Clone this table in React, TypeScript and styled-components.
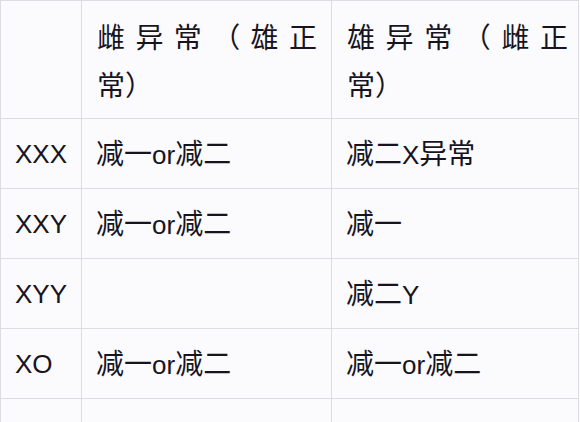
import React from "react";
import styled, { createGlobalStyle } from "styled-components";

const Global = createGlobalStyle`
  html, body { margin: 0; padding: 0; background: #fbfbfd; }
  body { font-family: "Liberation Sans", "Noto Sans CJK SC", sans-serif; }
`;

const Table = styled.table`
  border-collapse: collapse;
  table-layout: fixed;
  width: 578px;
  background: #fbfbfd;
  color: #17141f;
  font-size: 26px;
`;

const HeadCell = styled.th<{ $padRight: number }>`
  border: 1px solid #dcdde3;
  height: 118px;
  box-sizing: border-box;
  padding: 10px ${(p) => p.$padRight}px 10px 15px;
  text-align: justify;
  text-align-last: left;
  text-spacing-trim: space-all;
  vertical-align: middle;
  font-family: "Noto Sans CJK SC", sans-serif;
  font-weight: normal;
  font-size: 28px;
  line-height: 48px;
  overflow: hidden;
`;

const Cell = styled.td`
  border: 1px solid #dcdde3;
  height: 69px;
  padding: 0 0 0 14px;
  vertical-align: middle;
  line-height: 30px;
  white-space: nowrap;
`;

const CjkRun = styled.span`
  font-family: "Noto Sans CJK SC", sans-serif;
  font-size: 28px;
`;

function MixedText({ text }: { text: string }) {
  const parts = text.match(/[\u3000-\u9fff\uff00-\uffef]+|[^\u3000-\u9fff\uff00-\uffef]+/g) || [];
  return (
    <>
      {parts.map((p, i) =>
        /[\u3000-\u9fff\uff00-\uffef]/.test(p) ? <CjkRun key={i}>{p}</CjkRun> : <span key={i}>{p}</span>
      )}
    </>
  );
}

const rows: [string, string, string][] = [
  ["XXX", "减一or减二", "减二X异常"],
  ["XXY", "减一or减二", "减一"],
  ["XYY", "", "减二Y"],
  ["XO", "减一or减二", "减一or减二"],
  ["", "", ""],
];

export default function App() {
  return (
    <>
      <Global />
      <Table>
        <colgroup>
          <col style={{ width: 81 }} />
          <col style={{ width: 250 }} />
          <col style={{ width: 247 }} />
        </colgroup>
        <thead>
          <tr>
            <HeadCell $padRight={0}></HeadCell>
            <HeadCell $padRight={14}>雌异常（雄正常）</HeadCell>
            <HeadCell $padRight={10}>雄异常（雌正常）</HeadCell>
          </tr>
        </thead>
        <tbody>
          {rows.map((r, i) => (
            <tr key={i}>
              <Cell><MixedText text={r[0]} /></Cell>
              <Cell><MixedText text={r[1]} /></Cell>
              <Cell><MixedText text={r[2]} /></Cell>
            </tr>
          ))}
        </tbody>
      </Table>
    </>
  );
}
